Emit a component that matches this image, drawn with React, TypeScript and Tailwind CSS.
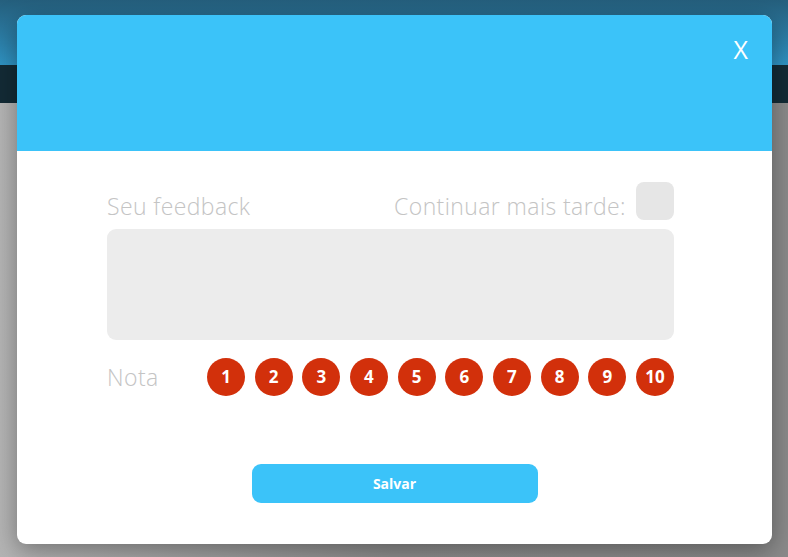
const notas = [1, 2, 3, 4, 5, 6, 7, 8, 9, 10];

function NotaButton({ value }: { value: number }) {
  return (
    <button
      className="flex h-[38px] w-[38px] items-center justify-center rounded-full bg-[#d2300b] text-[17px] font-bold text-white"
      style={{ fontFamily: "'Open Sans', 'Liberation Sans', sans-serif" }}
    >
      {value}
    </button>
  );
}

export default function App() {
  return (
    <div className="relative h-[557px] w-[788px] overflow-hidden bg-[#8c8c8c]">
      {/* page behind the dialog */}
      <div className="flex h-full flex-col">
        <div className="h-[65px] bg-gradient-to-b from-[#255f7d] to-[#2f93c3]" />
        <div className="h-[38px] bg-[#132b36]" />
        <div className="flex-1 bg-gradient-to-r from-[#b4b4b4] via-[#8c8c8c] to-[#8a8a8a]" />
      </div>

      {/* dialog */}
      <div
        className="absolute left-[17px] top-[15px] flex h-[529px] w-[755px] flex-col overflow-hidden rounded-[9px] bg-white shadow-[0_6px_24px_rgba(0,0,0,0.35)]"
        style={{ fontFamily: "'Open Sans', Lato, sans-serif" }}
      >
        <div className="relative h-[136px] bg-[#3bc3f9]">
          <button className="absolute right-[24px] top-[22px] text-[25px] font-normal leading-none text-white">
            X
          </button>
        </div>

        <div className="flex flex-1 flex-col pl-[90px] pr-[98px] pt-[31px]">
          <div className="flex h-[38px] items-center justify-between">
            <span className="mt-[10px] text-[23px] font-light tracking-[0.4px] text-[#c4c4c4]">
              Seu feedback
            </span>
            <div className="flex items-center gap-[10px]">
              <span className="mt-[10px] text-[23px] font-light tracking-[0.4px] text-[#c4c4c4]">
                Continuar mais tarde:
              </span>
              <div className="h-[38px] w-[38px] rounded-[8px] bg-[#e6e6e6]" />
            </div>
          </div>

          <div className="mt-[9px] h-[111px] rounded-[9px] bg-[#ececec]" />

          <div className="mt-[18px] flex items-center">
            <span className="w-[100px] text-[23px] font-light tracking-[0.4px] text-[#c4c4c4]">
              Nota
            </span>
            <div className="flex flex-1 justify-between">
              {notas.map((n) => (
                <NotaButton key={n} value={n} />
              ))}
            </div>
          </div>

          <div className="mt-[68px] flex justify-center pl-[8px]">
            <button className="h-[39px] w-[286px] rounded-[9px] bg-[#3bc3f9] text-[14px] font-bold text-white">
              Salvar
            </button>
          </div>
        </div>
      </div>
    </div>
  );
}
